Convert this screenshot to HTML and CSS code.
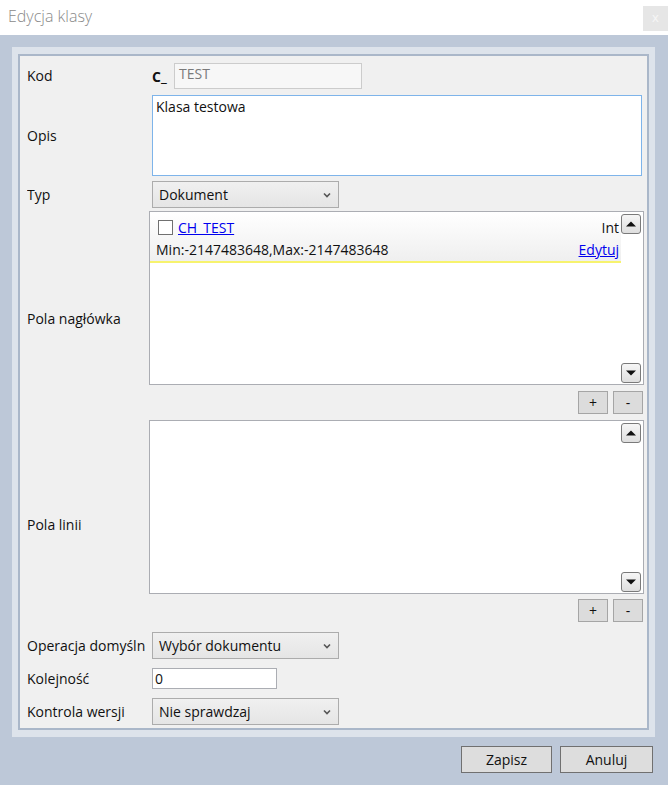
FILE: index.html
```html
<!DOCTYPE html>
<html>
<head>
<meta charset="utf-8">
<link rel="stylesheet" href="styles.css">
</head>
<body>
<div class="window">
  <div class="titlebar">
    <div class="title">Edycja klasy</div>
    <div class="close">x</div>
  </div>
  <div class="outer">
    <div class="inner">
      <div class="form">
        <div class="row r-kod">
          <div class="label">Kod</div>
          <div class="field kodfield">
            <span class="prefix">C_</span>
            <div class="kodinput">TEST</div>
          </div>
        </div>

        <div class="row r-opis">
          <div class="label">Opis</div>
          <div class="field"><div class="textarea">Klasa testowa</div></div>
        </div>

        <div class="row r-typ">
          <div class="label">Typ</div>
          <div class="field">
            <div class="select w187"><span>Dokument</span><svg class="chev" width="8" height="6" viewBox="0 0 8 6"><path d="M1 1.5 L4 4.5 L7 1.5" fill="none" stroke="#555" stroke-width="1.6"/></svg></div>
          </div>
        </div>

        <div class="row r-naglowek">
          <div class="label lbl-nag">Pola nagłówka</div>
          <div class="field">
            <div class="list">
              <div class="items">
                <div class="item">
                  <div class="itemrow">
                    <span class="check"></span>
                    <a class="link name">CH_TEST</a>
                    <span class="type">Int</span>
                  </div>
                  <div class="itemrow row2">
                    <span>Min:-2147483648,Max:-2147483648</span>
                    <a class="link edit">Edytuj</a>
                  </div>
                </div>
              </div>
              <div class="scroll">
                <div class="sbtn"><svg width="10" height="6" viewBox="0 0 10 6"><path d="M0 5.5 L5 0.5 L10 5.5 Z" fill="#111"/></svg></div>
                <div class="sbtn"><svg width="10" height="6" viewBox="0 0 10 6"><path d="M0 0.5 L5 5.5 L10 0.5 Z" fill="#111"/></svg></div>
              </div>
            </div>
            <div class="pm"><div class="pmbtn">+</div><div class="pmbtn">-</div></div>
          </div>
        </div>

        <div class="row r-linii">
          <div class="label lbl-lin">Pola linii</div>
          <div class="field">
            <div class="list">
              <div class="items"></div>
              <div class="scroll">
                <div class="sbtn"><svg width="10" height="6" viewBox="0 0 10 6"><path d="M0 5.5 L5 0.5 L10 5.5 Z" fill="#111"/></svg></div>
                <div class="sbtn"><svg width="10" height="6" viewBox="0 0 10 6"><path d="M0 0.5 L5 5.5 L10 0.5 Z" fill="#111"/></svg></div>
              </div>
            </div>
            <div class="pm pm2"><div class="pmbtn">+</div><div class="pmbtn">-</div></div>
          </div>
        </div>

        <div class="row r-op">
          <div class="label">Operacja domyśln</div>
          <div class="field">
            <div class="select w187"><span>Wybór dokumentu</span><svg class="chev" width="8" height="6" viewBox="0 0 8 6"><path d="M1 1.5 L4 4.5 L7 1.5" fill="none" stroke="#555" stroke-width="1.6"/></svg></div>
          </div>
        </div>

        <div class="row r-kol">
          <div class="label">Kolejność</div>
          <div class="field"><div class="numinput">0</div></div>
        </div>

        <div class="row r-ver">
          <div class="label">Kontrola wersji</div>
          <div class="field">
            <div class="select w187"><span>Nie sprawdzaj</span><svg class="chev" width="8" height="6" viewBox="0 0 8 6"><path d="M1 1.5 L4 4.5 L7 1.5" fill="none" stroke="#555" stroke-width="1.6"/></svg></div>
          </div>
        </div>
      </div>
    </div>
  </div>
  <div class="buttons">
    <div class="btn zapisz">Zapisz</div>
    <div class="btn anuluj">Anuluj</div>
  </div>
</div>
</body>
</html>
```
FILE: styles.css
```css
* { box-sizing: border-box; }
html, body { margin: 0; padding: 0; }
body {
  background: #bdc8d8;
  font-family: "Open Sans", "Noto Sans", sans-serif;
  font-size: 14px;
  color: #111;
  width: 668px;
  height: 785px;
  overflow: hidden;
}
.window { width: 668px; height: 785px; }
.titlebar {
  height: 35px;
  background: #fff;
  display: flex;
  align-items: flex-start;
}
.title {
  padding-left: 8px;
  padding-top: 5px;
  font-size: 16px;
  font-weight: 300;
  color: #8a8a8a;
}
.close {
  margin-left: auto;
  margin-top: 6px;
  width: 25px;
  height: 25px;
  background: #e6e6e6;
  color: #f6f6f6;
  font-size: 13px;
  text-align: center;
  line-height: 23px;
}
.outer {
  margin: 12px 13px 0 12px;
  height: 690px;
  background: #dde3eb;
  padding: 7px 6px 7px 6px;
}
.inner {
  height: 676px;
  background: #f0f0f0;
  border: 2px solid #aab7c9;
  padding: 7px 5px 0 7px;
}
.form {
  display: flex;
  flex-direction: column;
}
.row {
  display: flex;
  align-items: center;
}
.label {
  width: 125px;
  flex: none;
  white-space: nowrap;
  overflow: hidden;
  line-height: 20px;
}
.field { flex: 1; min-width: 0; }
.r-opis { margin-top: 6px; }
.r-typ { margin-top: 5px; }
.r-naglowek { margin-top: 3px; }
.r-linii { margin-top: 6px; }
.r-op { margin-top: 10px; }
.r-kol { margin-top: 9px; }
.r-ver { margin-top: 9px; }
.lbl-nag { padding-top: 12px; }
.lbl-lin { padding-top: 8px; }

.kodfield { display: flex; align-items: center; }
.prefix { font-weight: 700; width: 22px; font-size: 14px; }
.kodinput {
  width: 188px;
  height: 26px;
  border: 1px solid #cccccc;
  background: #f7f7f7;
  color: #7a7a7a;
  padding: 0 4px;
  line-height: 20px;
}
.textarea {
  height: 81px;
  border: 1px solid #7eb4ea;
  background: #fff;
  padding: 1px 3px;
}
.select {
  height: 27px;
  border: 1px solid #acacac;
  background: linear-gradient(#f0f0f0, #e5e5e5);
  display: flex;
  align-items: center;
  padding: 0 6px;
  justify-content: space-between;
}
.w187 { width: 187px; }
.chev { margin-right: 1px; }
.numinput {
  width: 125px;
  height: 21px;
  border: 1px solid #abadb3;
  background: #fff;
  padding: 0 2px;
  line-height: 19px;
}
.list {
  margin-left: -3px;
  margin-right: -2px;
  height: 174px;
  border: 1px solid #abadb3;
  background: #fff;
  display: flex;
}
.items { flex: 1; min-width: 0; }
.item {
  height: 51px;
  background: linear-gradient(#ffffff, #efefef);
  border-bottom: 2px solid #f7f36e;
  padding: 4px 2px 0 6px;
}
.itemrow { display: flex; align-items: center; height: 22px; }
.row2 { justify-content: space-between; height: 22px; }
.check {
  width: 15px;
  height: 15px;
  border: 1px solid #707070;
  background: #fff;
  margin: 0 5px 0 2px;
}
.link { color: #0000ee; text-decoration: underline; cursor: pointer; }
.type { margin-left: auto; }
.scroll {
  width: 22px;
  display: flex;
  flex-direction: column;
  justify-content: space-between;
  padding: 2px 2px 1px 0;
}
.sbtn {
  width: 20px;
  height: 20px;
  border: 1px solid #7a7a7a;
  border-radius: 3px;
  background: linear-gradient(#f6f6f6, #dedede);
  display: flex;
  align-items: center;
  justify-content: center;
}
.pm {
  display: flex;
  justify-content: flex-end;
  gap: 5px;
  margin-top: 6px;
  margin-right: -1px;
}
.pm2 { margin-top: 5px; }
.pmbtn {
  width: 30px;
  height: 23px;
  border: 1px solid #a5a5a5;
  background: #dcdcdc;
  text-align: center;
  line-height: 21px;
  font-size: 14px;
}
.buttons {
  display: flex;
  justify-content: flex-end;
  gap: 8px;
  margin-top: 9px;
  padding-right: 15px;
}
.btn {
  height: 27px;
  border: 1px solid #707070;
  background: #dddddd;
  text-align: center;
  line-height: 25px;
  font-size: 14px;
}
.zapisz { width: 91px; }
.anuluj { width: 93px; }
```
